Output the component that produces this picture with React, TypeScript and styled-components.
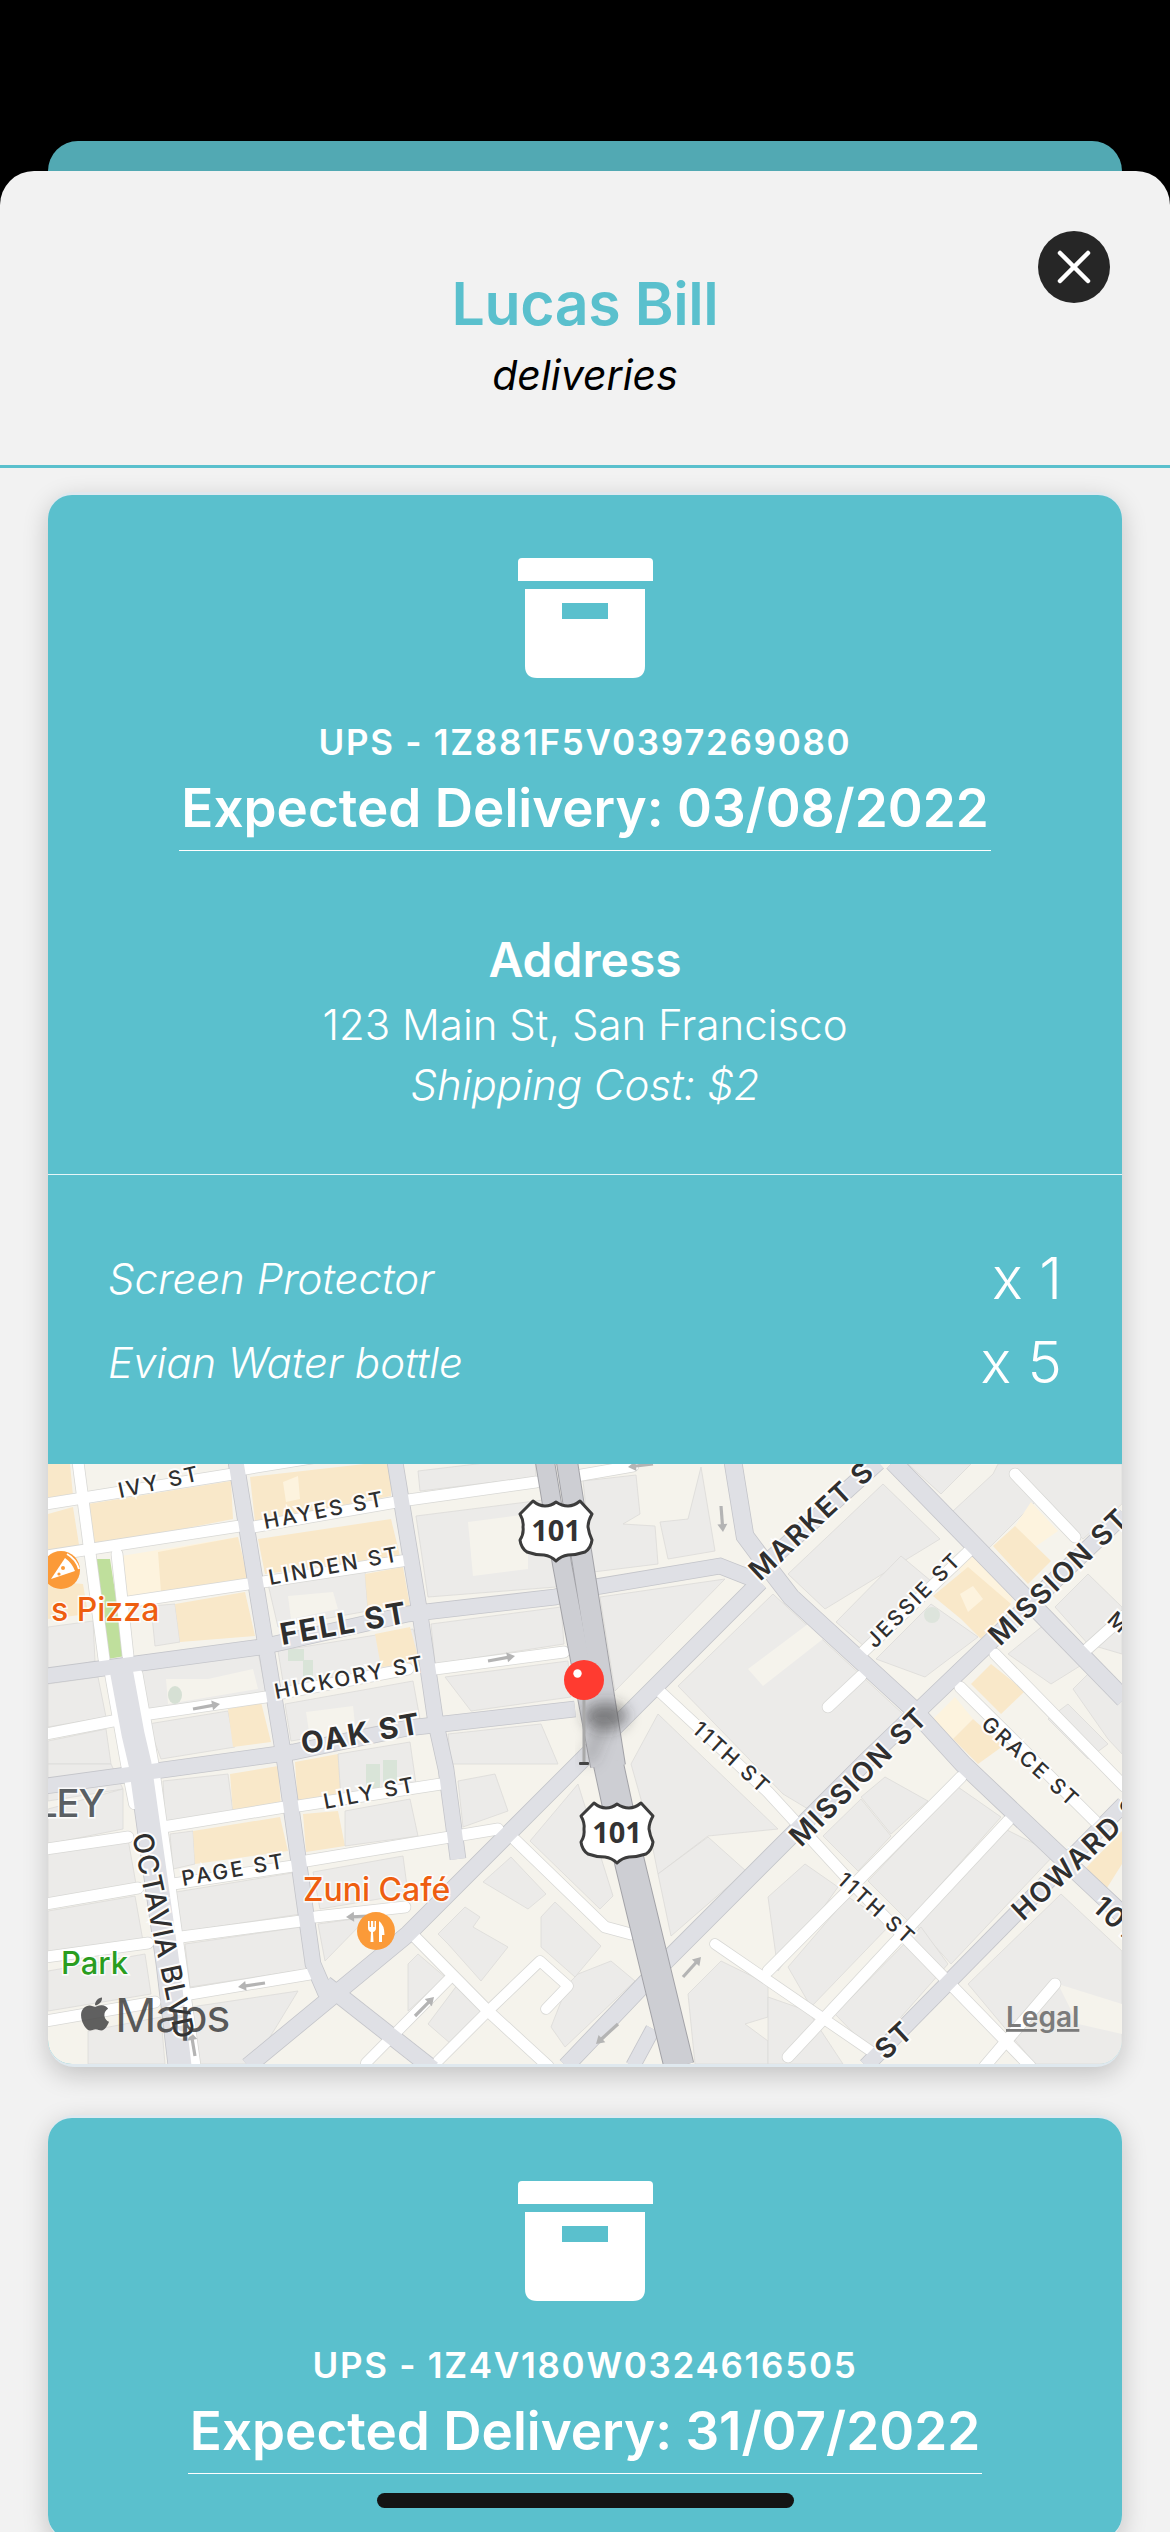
import React from "react";
import styled, { createGlobalStyle } from "styled-components";
import { FaApple } from "react-icons/fa";

const TEAL = "#5ac0cd";
const SANS = '"Inter", "Liberation Sans", sans-serif';

const GlobalStyle = createGlobalStyle`
  html, body {
    margin: 0;
    padding: 0;
    background: #000;
    font-family: ${SANS};
  }
`;

const Screen = styled.div`
  position: relative;
  width: 1170px;
  height: 2532px;
  padding-top: 141px;
  box-sizing: border-box;
  overflow: hidden;
  background: #000;
`;

const BackCard = styled.div`
  height: 30px;
  margin: 0 48px;
  border-radius: 30px 30px 0 0;
  background: #52a9b3;
`;

const Sheet = styled.div`
  position: relative;
  height: 2361px;
  border-radius: 34px 34px 0 0;
  background: #f2f2f2;
`;

const Header = styled.header`
  display: flex;
  flex-direction: column;
  align-items: center;
  height: 195px;
  padding-top: 99px;
  border-bottom: 3px solid ${TEAL};
`;

const Title = styled.h1`
  margin: 0;
  font-size: 59px;
  line-height: 68px;
  font-weight: 600;
  letter-spacing: -0.4px;
  color: ${TEAL};
`;

const Subtitle = styled.div`
  margin-top: 13px;
  font-size: 41px;
  line-height: 48px;
  font-style: italic;
  color: #000;
`;

const CloseButton = styled.button`
  position: absolute;
  top: 60px;
  right: 60px;
  display: flex;
  align-items: center;
  justify-content: center;
  width: 72px;
  height: 72px;
  padding: 0;
  border: 0;
  border-radius: 50%;
  background: #262626;
`;

const CardList = styled.div`
  display: flex;
  flex-direction: column;
  gap: 48px;
  padding: 24px 48px;
`;

const CardFrame = styled.article`
  padding: 3px 0;
  border-radius: 26px;
  background: #dfe8ee;
  box-shadow: 0 8px 26px rgba(0, 0, 0, 0.2);
`;

const CardInner = styled.div`
  overflow: hidden;
  border-radius: 24px;
  background: ${TEAL};
  color: #fff;
`;

const Summary = styled.section`
  display: flex;
  flex-direction: column;
  align-items: center;
  padding: 63px 0 65px;
`;

const BoxIcon = styled.svg`
  display: block;
  width: 135px;
  height: 120px;
`;

const Tracking = styled.div`
  margin-top: 44px;
  font-size: 35px;
  line-height: 40px;
  font-weight: 600;
  letter-spacing: 1.7px;
`;

const Expected = styled.div`
  margin-top: 16px;
  padding: 0 2px 12px;
  border-bottom: 1px solid #fff;
  font-size: 53px;
  line-height: 60px;
  font-weight: 600;
`;

const AddressTitle = styled.div`
  margin-top: 82px;
  font-size: 48px;
  line-height: 54px;
  font-weight: 600;
`;

const AddressLine = styled.div`
  margin-top: 14px;
  font-size: 42px;
  line-height: 48px;
  font-weight: 300;
`;

const ShippingCost = styled.div`
  margin-top: 12px;
  font-size: 42px;
  line-height: 48px;
  font-weight: 300;
  font-style: italic;
`;

const Items = styled.ul`
  margin: 0;
  padding: 61px 60px 60px;
  list-style: none;
  border-top: 1px solid rgba(255, 255, 255, 0.85);
`;

const ItemRow = styled.li`
  display: flex;
  align-items: center;
  justify-content: space-between;
  height: 84px;
`;

const ItemName = styled.span`
  font-size: 42px;
  font-weight: 300;
  font-style: italic;
`;

const ItemQty = styled.span`
  font-size: 58px;
  font-weight: 300;
`;

const MapCanvas = styled.svg`
  display: block;
  width: 1074px;
  height: 600px;
`;

const StreetLabel = styled.text<{ $size: number; $weight: number; $spacing: number }>`
  font-family: ${SANS};
  font-size: ${(p) => p.$size}px;
  font-weight: ${(p) => p.$weight};
  letter-spacing: ${(p) => p.$spacing}px;
  fill: #2f2f2f;
  stroke: rgba(255, 255, 255, 0.92);
  stroke-width: 4px;
  paint-order: stroke;
`;

const PlaceLabel = styled.text<{ $color: string; $size: number; $spacing?: number }>`
  font-family: ${SANS};
  font-size: ${(p) => p.$size}px;
  font-weight: 500;
  letter-spacing: ${(p) => p.$spacing ?? 0}px;
  fill: ${(p) => p.$color};
  stroke: rgba(255, 255, 255, 0.85);
  stroke-width: 3px;
  paint-order: stroke;
`;

const ShieldNumber = styled.text`
  font-family: "Open Sans", "Noto Sans", sans-serif;
  font-size: 29px;
  font-weight: 700;
  fill: #333;
  text-anchor: middle;
`;

const MapsWord = styled.text`
  font-family: ${SANS};
  font-size: 46px;
  letter-spacing: -1.4px;
  fill: rgba(55, 55, 55, 0.82);
`;

const LegalLink = styled.text`
  font-family: ${SANS};
  font-size: 28px;
  font-weight: 600;
  fill: #7b7b7b;
  text-decoration: underline;
`;

const HomeIndicator = styled.div`
  position: absolute;
  left: 377px;
  bottom: 24px;
  width: 417px;
  height: 15px;
  border-radius: 8px;
  background: #141414;
`;

const GREY = "#ecebe9";
const BEIGE = "#f9e8c9";
const LIGHT = "#fdf3de";
const PALE = "#f5f3ec";

const blocks: [string, string][] = [
  // west of the freeway
  [BEIGE, "0,0 22,0 25,32 0,35"],
  [BEIGE, "0,50 25,43 32,87 0,93"],
  [BEIGE, "40,40 183,17 185,55 43,83"],
  [BEIGE, "202,13 343,-3 343,32 207,58"],
  [LIGHT, "235,18 250,12 252,35 238,38"],
  [BEIGE, "210,75 343,55 352,92 217,110"],
  [LIGHT, "73,92 190,73 200,115 80,133"],
  [BEIGE, "110,88 190,73 200,115 113,128"],
  [GREY, "103,142 127,140 132,178 107,182"],
  [BEIGE, "127,140 197,128 207,172 132,178"],
  [BEIGE, "0,117 35,120 40,150 0,155"],
  [GREY, "0,163 45,157 47,197 0,207"],
  [GREY, "92,207 210,188 218,228 100,247"],
  [PALE, "118,215 160,215 205,205 210,225 120,240"],
  [GREY, "230,187 365,165 375,200 237,230"],
  [GREY, "237,240 365,217 372,255 243,277"],
  [PALE, "258,248 305,242 308,270 262,274"],
  [GREY, "100,260 180,247 187,283 113,295"],
  [BEIGE, "180,245 213,238 223,278 185,283"],
  [GREY, "220,120 317,107 320,147 230,163"],
  [PALE, "240,132 285,128 290,145 243,155"],
  [BEIGE, "317,110 355,103 362,142 320,147"],
  [BEIGE, "327,170 362,163 372,200 333,203"],
  [GREY, "0,220 50,213 58,253 0,263"],
  [GREY, "0,277 58,265 63,300 0,300"],
  [GREY, "0,300 63,300 75,325 0,337"],
  [GREY, "115,317 180,310 185,348 117,358"],
  [BEIGE, "182,310 230,302 233,342 185,348"],
  [BEIGE, "247,298 290,290 293,335 250,342"],
  [GREY, "290,290 362,278 368,320 293,335"],
  [GREY, "122,370 145,367 147,400 125,405"],
  [BEIGE, "145,367 232,353 240,387 147,400"],
  [BEIGE, "255,350 290,347 297,382 258,388"],
  [GREY, "297,347 362,335 370,372 297,382"],
  [GREY, "0,345 75,325 75,365 0,380"],
  [GREY, "0,390 80,375 88,420 0,435"],
  [GREY, "0,447 87,432 95,477 0,490"],
  [GREY, "0,507 97,490 103,530 0,547"],
  [GREY, "40,567 113,553 117,600 40,600"],
  [GREY, "128,428 250,408 253,450 133,468"],
  [GREY, "137,480 253,463 260,505 142,523"],
  [GREY, "143,543 250,527 230,560 205,600 147,600"],
  [GREY, "270,460 320,453 277,497"],
  [GREY, "265,408 355,392 360,430 272,445"],
  // around the freeway
  [GREY, "370,7 487,-7 488,13 372,27"],
  [GREY, "368,52 503,35 508,123 380,133"],
  [PALE, "420,58 480,50 480,105 425,112"],
  [GREY, "383,160 513,143 516,180 387,200"],
  [GREY, "397,213 520,197 523,233 423,247"],
  [GREY, "400,270 493,260 510,300 403,300"],
  [GREY, "535,17 588,11 592,50 575,60 607,62 610,100 545,108"],
  [GREY, "612,58 640,55 653,3 667,87 620,95"],
  [GREY, "552,133 677,115 567,227"],
  [GREY, "410,317 447,310 460,347 415,363"],
  [GREY, "482,377 530,320 565,432 552,445"],
  [GREY, "390,470 417,443 432,453 425,463 460,483 433,517 400,480"],
  [GREY, "435,418 463,393 498,430 480,445"],
  [GREY, "493,453 507,438 553,482 527,513 493,483"],
  [GREY, "530,510 563,497 587,517 517,583 503,563 520,520"],
  [GREY, "360,500 370,490 397,513 360,547"],
  [GREY, "380,560 410,520 437,547 403,580"],
  [GREY, "640,530 673,497 720,520 720,553 697,560 720,577 720,600 647,600"],
  // east of the freeway
  [GREY, "630,222 725,130 855,250 760,345 735,330"],
  [PALE, "700,205 760,160 775,175 715,222"],
  [GREY, "583,300 610,250 730,365 660,372 610,410 600,360"],
  [GREY, "610,410 660,373 698,407 623,472"],
  [GREY, "775,372 813,335 843,372 810,407"],
  [GREY, "813,333 837,313 880,337 843,370"],
  [GREY, "820,417 910,323 953,353 860,457"],
  [GREY, "867,460 953,363 1007,390 903,500"],
  [GREY, "920,520 1013,430 1074,487 1074,600 987,600"],
  [PALE, "1010,520 1074,540 1074,570 1030,560"],
  [GREY, "720,433 757,400 790,423 730,507"],
  [GREY, "740,503 800,433 843,460 763,543"],
  [GREY, "787,550 873,463 900,500 823,587"],
  [GREY, "720,533 760,547 795,600 720,600"],
  [GREY, "860,0 923,0 893,30"],
  [GREY, "905,47 945,10 950,0 1074,0 1074,40 1035,75 990,35 940,85"],
  [GREY, "740,110 835,20 892,75 777,145"],
  [GREY, "788,158 853,92 883,117 817,183"],
  [GREY, "828,195 883,140 930,173 877,213"],
  [LIGHT, "905,95 920,85 965,135 945,165"],
  [BEIGE, "885,132 920,103 963,140 933,175 913,155"],
  [LIGHT, "912,130 925,122 935,135 920,148"],
  [LIGHT, "967,62 983,38 1010,67 987,83"],
  [BEIGE, "945,82 967,62 1003,97 980,120"],
  [LIGHT, "883,257 907,233 925,255 905,275"],
  [BEIGE, "905,275 925,255 955,282 930,300"],
  [BEIGE, "923,220 943,200 977,227 953,250"],
  [GREY, "1007,143 1040,110 1074,143 1074,190 1040,180"],
  [GREY, "960,190 997,160 1040,197 1003,220"],
  [GREY, "1025,225 1045,205 1074,235 1074,290 1060,275"],
  [GREY, "1000,255 1020,240 1060,280 1040,295"],
  [BEIGE, "1035,407 1074,367 1074,400 1057,427"],
];

const greyRoads: [string, number][] = [
  ["188,-2 237,300 265,500 278,530", 15],
  ["347,-2 372,150 388,260 398,305 410,395", 15],
  ["73,205 85,270 92,300 120,500 132,602", 23],
  ["-2,212 213,183 360,150 507,133 547,123 672,102 705,115", 15],
  ["-2,322 100,308 245,288 360,264 527,245", 15],
  ["712,118 360,470 200,602", 16],
  ["277,520 385,605", 16],
  ["845,-2 1076,235", 17],
  ["685,-2 697,72 720,103 743,133 863,243 915,300 1010,390 1076,452", 17],
  ["703,113 830,-2", 16],
  ["1076,50 940,180 820,295 620,495 518,602", 16],
  ["1076,340 818,602", 15],
  ["585,602 605,565", 14],
];

const whiteRoads: [string, number][] = [
  ["-2,40 185,10", 11],
  ["197,5 276,-8", 11],
  ["-2,92 192,62", 11],
  ["205,63 360,36 488,18", 11],
  ["528,12 585,2", 11],
  ["80,138 200,120", 11],
  ["215,118 360,96", 11],
  ["95,251 218,233 240,228 360,205", 11],
  ["387,205 516,188", 11],
  ["-2,270 70,256", 11],
  ["115,363 237,343", 11],
  ["250,342 393,320", 11],
  ["-2,385 80,373", 11],
  ["-2,440 90,424", 11],
  ["125,420 245,402", 11],
  ["258,397 360,380 450,365", 11],
  ["133,473 253,457", 11],
  ["267,453 357,443", 11],
  ["142,530 262,510", 11],
  ["-2,493 100,479", 11],
  ["-2,557 107,538", 11],
  ["30,-2 56,195", 11],
  ["69,90 80,192", 11],
  ["62,210 78,300 86,340", 10],
  ["89,210 105,300 147,602", 11],
  ["463,372 557,463 583,470", 11],
  ["367,473 440,547 500,602", 11],
  ["440,547 492,497 520,522 498,545", 10],
  ["440,547 390,597", 10],
  ["403,513 318,599", 10],
  ["607,223 720,328 800,415 982,602", 11],
  ["813,190 920,88", 11],
  ["780,243 813,212", 11],
  ["967,10 1027,73", 11],
  ["947,190 1076,322", 11],
  ["912,223 1050,360", 11],
  ["1037,187 1076,152", 11],
  ["720,507 913,313", 11],
  ["740,593 960,357", 11],
  ["667,480 827,590", 10],
  ["937,602 1007,520", 11],
];

const arrows: string[] = [
  "145,245 172,240",
  "440,197 467,192",
  "605,0 580,3",
  "673,42 675,68",
  "217,519 190,523",
  "320,452 298,453",
  "635,513 653,493",
  "570,560 548,580",
  "367,552 386,533",
  "147,592 143,568",
];

type Label = { t: string; x: number; y: number; a: number; s: number; w: number; ls: number };

const labels: Label[] = [
  { t: "IVY ST", x: 72, y: 34, a: -12.5, s: 21, w: 500, ls: 2.6 },
  { t: "HAYES ST", x: 217, y: 65, a: -11, s: 21, w: 500, ls: 2.6 },
  { t: "LINDEN ST", x: 222, y: 121, a: -10.5, s: 21, w: 500, ls: 2.6 },
  { t: "FELL ST", x: 234, y: 181, a: -10, s: 30, w: 700, ls: 1.8 },
  { t: "HICKORY ST", x: 228, y: 235, a: -11, s: 21, w: 500, ls: 2.6 },
  { t: "OAK ST", x: 255, y: 290, a: -10, s: 29.5, w: 700, ls: 1.8 },
  { t: "LILY ST", x: 277, y: 345, a: -11, s: 21, w: 500, ls: 2.6 },
  { t: "PAGE ST", x: 135, y: 422, a: -10, s: 21, w: 500, ls: 2.6 },
  { t: "OCTAVIA BLVD", x: 84, y: 371, a: 78, s: 28, w: 500, ls: 0.6 },
  { t: "MARKET S", x: 712, y: 118, a: -43, s: 28, w: 600, ls: 1.8 },
  { t: "MISSION ST", x: 952, y: 183, a: -44, s: 28, w: 600, ls: 1.8 },
  { t: "MISSION ST", x: 753, y: 384, a: -45, s: 28, w: 600, ls: 1.8 },
  { t: "JESSIE ST", x: 827, y: 185, a: -45, s: 21, w: 500, ls: 2.4 },
  { t: "11TH ST", x: 643, y: 267, a: 42, s: 21, w: 500, ls: 2.4 },
  { t: "11TH ST", x: 788, y: 418, a: 42, s: 21, w: 500, ls: 2.4 },
  { t: "GRACE ST", x: 932, y: 262, a: 42, s: 21, w: 500, ls: 2.4 },
  { t: "HOWARD S", x: 975, y: 458, a: -43, s: 28, w: 600, ls: 1.8 },
  { t: "ST", x: 838, y: 597, a: -43, s: 28, w: 600, ls: 1.8 },
  { t: "101", x: 1043, y: 445, a: 42, s: 28, w: 600, ls: 1.8 },
  { t: "M", x: 1058, y: 157, a: 42, s: 21, w: 500, ls: 2 },
];

const shieldPath =
  "M0 13 L13 0 Q19 5 25 5 Q31 5 36 1 Q42 5 48 5 Q54 5 60 0 L72 13 Q68 20 68 26 Q69 33 72 39 Q71 47 65 51 Q56 54 48 54 Q41 55 36 60 Q31 55 24 54 Q15 54 7 51 Q1 47 0 39 Q4 33 3 26 Q4 20 0 13 Z";

function Shield({ x, y }: { x: number; y: number }) {
  return (
    <g transform={`translate(${x} ${y})`}>
      <path d={shieldPath} fill="#fff" stroke="#3c3c3c" strokeWidth="3" strokeLinejoin="round" />
      <ShieldNumber x="36" y="40">
        101
      </ShieldNumber>
    </g>
  );
}

function OneWayArrow({ points }: { points: string }) {
  const [a, b] = points.split(" ").map((p) => p.split(",").map(Number));
  const angle = (Math.atan2(b[1] - a[1], b[0] - a[0]) * 180) / Math.PI;
  const len = Math.hypot(b[0] - a[0], b[1] - a[1]);
  return (
    <g transform={`translate(${a[0]} ${a[1]}) rotate(${angle})`} fill="#b4b4b4">
      <rect x="0" y="-1.6" width={len - 6} height="3.2" />
      <path d={`M${len - 8} -5 L${len} 0 L${len - 8} 5 Z`} />
    </g>
  );
}

function StreetMap() {
  return (
    <MapCanvas viewBox="0 0 1074 600">
      <defs>
        <filter id="pinBlur" x="-80%" y="-80%" width="260%" height="260%">
          <feGaussianBlur stdDeviation="7" />
        </filter>
      </defs>
      <rect width="1074" height="600" fill={PALE} />
      {blocks.map(([fill, points], i) => (
        <polygon
          key={i}
          points={points}
          fill={fill}
          stroke={fill === GREY ? "#dcdbd8" : "none"}
          strokeWidth="0.8"
        />
      ))}
      <polygon points="47,95 62,95 77,192 60,195" fill="#bfdf9c" />
      <ellipse cx="127" cy="231" rx="7" ry="9" fill="#d6e0d4" />
      <rect x="240" y="185" width="16" height="12" fill="#d9e4d8" />
      <rect x="255" y="196" width="10" height="20" fill="#d9e4d8" />
      <rect x="318" y="300" width="14" height="24" fill="#d9e4d8" />
      <rect x="335" y="296" width="14" height="24" fill="#d9e4d8" />
      <circle cx="884" cy="151" r="8" fill="#dde4dc" />

      {whiteRoads.map(([points, width], i) => (
        <polyline
          key={i}
          points={points}
          fill="none"
          stroke="#d8d8d5"
          strokeWidth={width + 1.5}
          strokeLinecap="round"
          strokeLinejoin="round"
        />
      ))}
      {greyRoads.map(([points, width], i) => (
        <polyline key={i} points={points} fill="none" stroke="#c4c5ca" strokeWidth={width + 1.6} />
      ))}
      {whiteRoads.map(([points, width], i) => (
        <polyline
          key={i}
          points={points}
          fill="none"
          stroke="#fff"
          strokeWidth={width}
          strokeLinecap="round"
          strokeLinejoin="round"
        />
      ))}
      {greyRoads.map(([points, width], i) => (
        <polyline key={i} points={points} fill="none" stroke="#dfe0e5" strokeWidth={width} />
      ))}
      {arrows.map((points) => (
        <OneWayArrow key={points} points={points} />
      ))}

      <polyline points="497,-2 514,100 552,302" fill="none" stroke="#a3a3a8" strokeWidth="20" />
      <polyline points="519,-2 535,100 567,302" fill="none" stroke="#a3a3a8" strokeWidth="22" />
      <polyline points="560,298 582,400 631,602" fill="none" stroke="#a3a3a8" strokeWidth="31" />
      <polyline points="497,-2 514,100 552,302" fill="none" stroke="#cdced3" strokeWidth="18" />
      <polyline points="519,-2 535,100 567,302" fill="none" stroke="#cdced3" strokeWidth="20" />
      <polyline points="560,298 582,400 631,602" fill="none" stroke="#cdced3" strokeWidth="29" />

      <ellipse cx="558" cy="252" rx="22" ry="14" fill="#333" fillOpacity="0.5" filter="url(#pinBlur)" />
      <line x1="540" y1="298" x2="556" y2="258" stroke="#444" strokeOpacity="0.22" strokeWidth="14" filter="url(#pinBlur)" />

      {labels.map((l, i) => (
        <StreetLabel
          key={i}
          transform={`translate(${l.x} ${l.y}) rotate(${l.a})`}
          $size={l.s}
          $weight={l.w}
          $spacing={l.ls}
        >
          {l.t}
        </StreetLabel>
      ))}

      <PlaceLabel x="56" y="353" textAnchor="end" $color="#5a5f63" $size={38} $spacing={-1}>
        LEY
      </PlaceLabel>
      <PlaceLabel x="3" y="157" $color="#ee5e10" $size={32}>
        s Pizza
      </PlaceLabel>
      <PlaceLabel x="255" y="437" $color="#ee5e10" $size={32}>
        Zuni Café
      </PlaceLabel>
      <PlaceLabel x="13" y="510" $color="#2a9d1f" $size={31}>
        Park
      </PlaceLabel>

      <circle cx="13" cy="106" r="19" fill="#fb9a38" />
      <path d="M3 115 L17 94 Q24 99 27 107 Z" fill="#fff" />
      <path d="M19 90 Q28 95 31 105" fill="none" stroke="#fff" strokeWidth="2" />
      <circle cx="15" cy="104" r="2" fill="#fb9a38" />
      <circle cx="11" cy="110" r="1.6" fill="#fb9a38" />

      <circle cx="328" cy="467" r="19" fill="#fb9a38" />
      <path
        d="M320 457 V464 Q320 467 323 468 L322.5 478 H325.5 L325 468 Q328 467 328 464 V457 H326.6 V463 H325.2 V457 H323 V463 H321.6 V457 Z"
        fill="#fff"
      />
      <path d="M331 478 V457 Q336.5 461 336.5 471 H334 V478 Z" fill="#fff" />

      <Shield x={472} y={37} />
      <Shield x={533} y={339} />

      <line x1="536" y1="234" x2="536" y2="300" stroke="#a9a9a9" strokeWidth="3" />
      <rect x="531" y="298" width="10" height="3" rx="1" fill="#444" />
      <circle cx="536" cy="216" r="20" fill="#ff3b30" />
      <circle cx="529.5" cy="209.5" r="4.2" fill="#fff" />

      <FaApple x="28" y="531" size={38} color="#4f4f4f" opacity="0.9" />
      <MapsWord x="67" y="568">
        Maps
      </MapsWord>
      <LegalLink x="958" y="563">
        Legal
      </LegalLink>
    </MapCanvas>
  );
}

function ArchiveBox() {
  return (
    <BoxIcon viewBox="0 0 135 120">
      <path d="M4 0 H131 Q135 0 135 4 V23 H0 V4 Q0 0 4 0 Z" fill="#fff" />
      <path
        fillRule="evenodd"
        d="M7 31 H127 V108 Q127 120 115 120 H19 Q7 120 7 108 Z M44 45 V61 H90 V45 Z"
        fill="#fff"
      />
    </BoxIcon>
  );
}

type Delivery = {
  tracking: string;
  expected: string;
  details?: {
    address: string;
    shipping: string;
    items: { name: string; qty: number }[];
  };
};

const deliveries: Delivery[] = [
  {
    tracking: "UPS - 1Z881F5V0397269080",
    expected: "Expected Delivery: 03/08/2022",
    details: {
      address: "123 Main St, San Francisco",
      shipping: "Shipping Cost: $2",
      items: [
        { name: "Screen Protector", qty: 1 },
        { name: "Evian Water bottle", qty: 5 },
      ],
    },
  },
  {
    tracking: "UPS - 1Z4V180W0324616505",
    expected: "Expected Delivery: 31/07/2022",
  },
];

export default function App() {
  return (
    <>
      <GlobalStyle />
      <Screen>
        <BackCard />
        <Sheet>
          <Header>
            <Title>Lucas Bill</Title>
            <Subtitle>deliveries</Subtitle>
          </Header>
          <CloseButton aria-label="Close">
            <svg width="34" height="34" viewBox="0 0 34 34">
              <path d="M3 3 L31 31 M31 3 L3 31" stroke="#fff" strokeWidth="4.5" strokeLinecap="round" />
            </svg>
          </CloseButton>
          <CardList>
            {deliveries.map((d) => (
              <CardFrame key={d.tracking}>
                <CardInner>
                  <Summary>
                    <ArchiveBox />
                    <Tracking>{d.tracking}</Tracking>
                    <Expected>{d.expected}</Expected>
                    {d.details && (
                      <>
                        <AddressTitle>Address</AddressTitle>
                        <AddressLine>{d.details.address}</AddressLine>
                        <ShippingCost>{d.details.shipping}</ShippingCost>
                      </>
                    )}
                  </Summary>
                  {d.details && (
                    <>
                      <Items>
                        {d.details.items.map((item) => (
                          <ItemRow key={item.name}>
                            <ItemName>{item.name}</ItemName>
                            <ItemQty>x {item.qty}</ItemQty>
                          </ItemRow>
                        ))}
                      </Items>
                      <StreetMap />
                    </>
                  )}
                </CardInner>
              </CardFrame>
            ))}
          </CardList>
        </Sheet>
        <HomeIndicator />
      </Screen>
    </>
  );
}
